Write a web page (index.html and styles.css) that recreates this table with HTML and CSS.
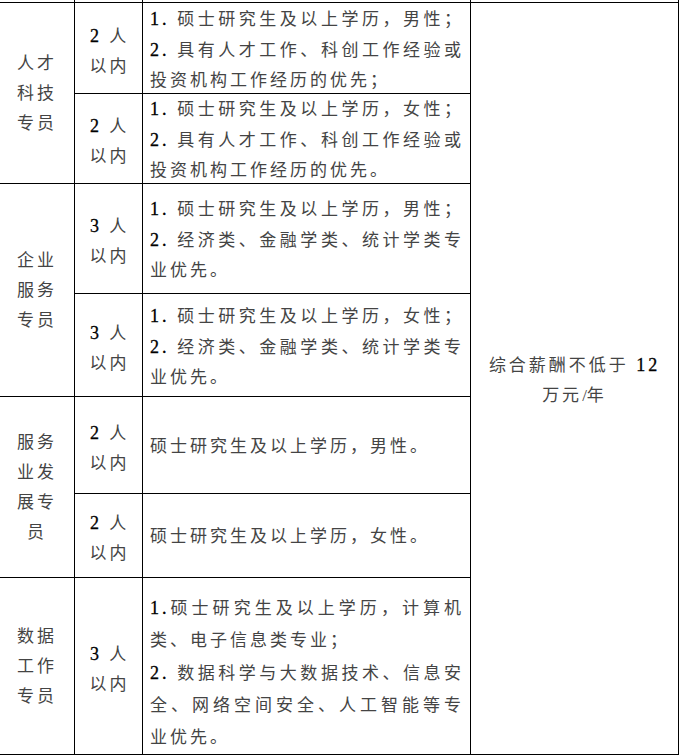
FILE: index.html
```html
<!DOCTYPE html>
<html lang="zh-CN">
<head>
<meta charset="utf-8">
<title>岗位表</title>
<link rel="stylesheet" href="styles.css">
</head>
<body>
<div class="sheet">
  <div class="cell spacer"></div>
  <div class="cell spacer"></div>
  <div class="cell spacer"></div>
  <div class="cell spacer"></div>

  <div class="cell post span2"><div>人才<br>科技<br>专员</div></div>
  <div class="cell num"><div><span class="n">2</span> 人<br>以内</div></div>
  <div class="cell req">
    <div class="j"><span class="n">1.</span> 硕士研究生及以上学历，男性；</div>
    <div class="j"><span class="n">2.</span> 具有人才工作、科创工作经验或</div>
    <div>投资机构工作经历的优先；</div>
  </div>
  <div class="cell pay"><div>综合薪酬不低于 <span class="n">12</span><br>万元<span class="slash">/</span>年</div></div>

  <div class="cell num"><div><span class="n">2</span> 人<br>以内</div></div>
  <div class="cell req">
    <div class="j"><span class="n">1.</span> 硕士研究生及以上学历，女性；</div>
    <div class="j"><span class="n">2.</span> 具有人才工作、科创工作经验或</div>
    <div>投资机构工作经历的优先。</div>
  </div>

  <div class="cell post span2"><div>企业<br>服务<br>专员</div></div>
  <div class="cell num"><div><span class="n">3</span> 人<br>以内</div></div>
  <div class="cell req">
    <div class="j"><span class="n">1.</span> 硕士研究生及以上学历，男性；</div>
    <div class="j"><span class="n">2.</span> 经济类、金融学类、统计学类专</div>
    <div>业优先。</div>
  </div>

  <div class="cell num"><div><span class="n">3</span> 人<br>以内</div></div>
  <div class="cell req">
    <div class="j"><span class="n">1.</span> 硕士研究生及以上学历，女性；</div>
    <div class="j"><span class="n">2.</span> 经济类、金融学类、统计学类专</div>
    <div>业优先。</div>
  </div>

  <div class="cell post span2"><div>服务<br>业发<br>展专<br>员</div></div>
  <div class="cell num"><div><span class="n">2</span> 人<br>以内</div></div>
  <div class="cell req"><div>硕士研究生及以上学历，男性。</div></div>

  <div class="cell num"><div><span class="n">2</span> 人<br>以内</div></div>
  <div class="cell req"><div>硕士研究生及以上学历，女性。</div></div>

  <div class="cell post"><div>数据<br>工作<br>专员</div></div>
  <div class="cell num"><div><span class="n">3</span> 人<br>以内</div></div>
  <div class="cell req tall">
    <div class="j"><span class="n">1.</span>硕士研究生及以上学历，计算机</div>
    <div>类、电子信息类专业；</div>
    <div class="j"><span class="n">2.</span> 数据科学与大数据技术、信息安</div>
    <div class="j">全、网络空间安全、人工智能等专</div>
    <div>业优先。</div>
  </div>
</div>
</body>
</html>
```

FILE: styles.css
```css
html, body {
  margin: 0;
  padding: 0;
  background: #fff;
}

.sheet {
  display: grid;
  grid-template-columns: 74px 67px 327px 207px;
  grid-template-rows: 2px 90px 89px 109px 102px 96px 83px 176px;
  gap: 1px;
  padding: 0 1px 1px 0;
  width: 678px;
  background: #000;
  font-family: "Liberation Serif", "Noto Sans CJK SC", serif;
  font-size: 17px;
  letter-spacing: 3px;
  line-height: 30px;
  color: #444;
}

.cell {
  background: #fff;
  display: flex;
  flex-direction: column;
  justify-content: center;
}

.spacer {
  padding: 0;
}

.span2 {
  grid-row: span 2;
}

.post {
  text-align: center;
  padding-top: 2px;
}

.num {
  text-align: center;
  padding-top: 6px;
  padding-left: 2px;
}

.req {
  padding: 3px 6px 0 7px;
}

.req.tall {
  line-height: 32px;
  padding-top: 14px;
}

.j {
  text-align: justify;
  text-align-last: justify;
}

.pay {
  grid-row: span 7;
  text-align: center;
  padding-top: 4px;
}

.n {
  color: #000;
  font-size: 18px;
  font-weight: 600;
  -webkit-text-stroke: 0.3px #000;
}

.n {
  font-weight: normal;
}

.slash {
  letter-spacing: 0;
}
```
